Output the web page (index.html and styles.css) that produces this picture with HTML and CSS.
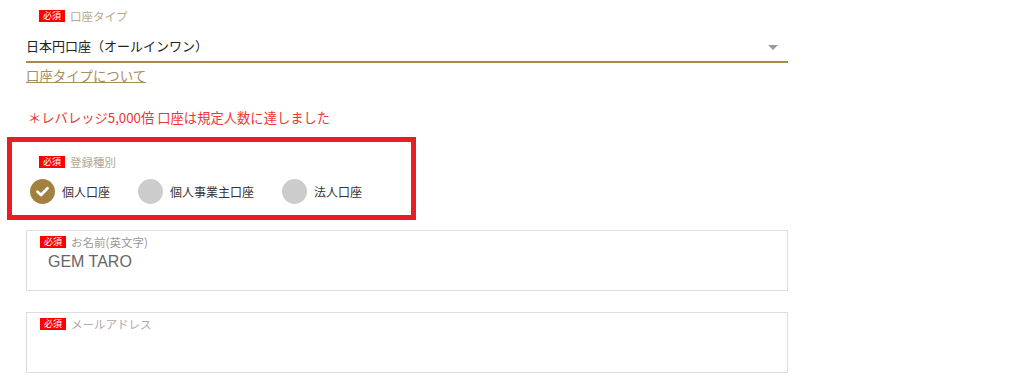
FILE: index.html
```html
<!DOCTYPE html>
<html lang="ja">

<head>
    <meta charset="utf-8" />
    <meta name="viewport" content="width=device-width" />
    <title>口座開設フォーム</title>
    <link rel="stylesheet" href="styles.css">
</head>
<body>
    <main class="form">
        <!-- 口座タイプ -->
        <div class="field-label"><span class="badge">必須</span>口座タイプ</div>
        <div class="select">
            <span>日本円口座（オールインワン）</span>
            <span class="select-arrow"></span>
        </div>
        <a class="link" href="#">口座タイプについて</a>
        <p class="notice">＊レバレッジ5,000倍 口座は規定人数に達しました</p>

        <!-- 登録種別 -->
        <section class="choice-box">
            <div class="field-label"><span class="badge">必須</span>登録種別</div>
            <div class="radios">
                <label class="radio is-checked">
                    <span class="radio-mark">
                        <svg width="25" height="25" viewBox="0 0 25 25"><polyline points="7.5,12.8 11,16 17.5,9.2" fill="none" stroke="#fff" stroke-width="2.8" stroke-linecap="round" stroke-linejoin="round"/></svg>
                    </span>
                    個人口座
                </label>
                <label class="radio"><span class="radio-mark"></span>個人事業主口座</label>
                <label class="radio"><span class="radio-mark"></span>法人口座</label>
            </div>
        </section>

        <!-- お名前 -->
        <div class="text-field">
            <div class="field-label is-gray"><span class="badge">必須</span>お名前(英文字)</div>
            <div class="text-value">GEM TARO</div>
        </div>

        <!-- メールアドレス -->
        <div class="text-field is-spaced">
            <div class="field-label is-light"><span class="badge">必須</span>メールアドレス</div>
            <div class="text-value"></div>
        </div>
    </main>
</body>

</html>
```

FILE: styles.css
```css
:root {
    --gold: #a88a4f;
    --gold-text: #a88d5e;
    --label-color: #b5a88e;
    --font-family: "Noto Sans CJK JP", "Noto Sans", sans-serif;
}

* {
    box-sizing: border-box;
    margin: 0;
    padding: 0;
}

body {
    background-color: #fff;
    font-family: var(--font-family);
    color: #333;
    margin: 0;
}

.form {
    width: 762px;
    margin-left: 26px;
    padding-top: 9px;
}

.field-label {
    display: flex;
    align-items: center;
    gap: 5px;
    height: 14px;
    padding-left: 13px;
    font-size: 11.5px;
    line-height: 14px;
    color: var(--label-color);
}

.field-label.is-gray {
    color: #999;
}

.field-label.is-light {
    color: #aaa;
}

.badge {
    display: inline-block;
    width: 26px;
    height: 12px;
    line-height: 12px;
    background-color: #f00;
    color: #fff;
    font-size: 9px;
    text-align: center;
}

.select {
    display: flex;
    justify-content: space-between;
    align-items: center;
    padding: 13px 10px 5px 0;
    border-bottom: 2px solid var(--gold);
    font-size: 13px;
    line-height: 20px;
    color: #222;
}

.select-arrow {
    width: 0;
    height: 0;
    margin-top: 3px;
    border-left: 5px solid transparent;
    border-right: 5px solid transparent;
    border-top: 5px solid #999;
}

.link {
    display: block;
    width: fit-content;
    margin-top: 2px;
    font-size: 13.4px;
    line-height: 20px;
    color: var(--gold-text);
    text-decoration: underline;
}

.notice {
    margin: 23px 0 0 2px;
    font-size: 13.3px;
    line-height: 20px;
    color: #ee3535;
}

/* 登録種別 (赤枠) */
.choice-box {
    width: 409px;
    margin: 9px 0 0 -19px;
    padding: 13px 0 11px 18px;
    border: 5px solid #ec1c24;
}

.choice-box .field-label {
    padding-left: 9px;
}

.radios {
    display: flex;
    gap: 28px;
    margin-top: 10px;
}

.radio {
    display: flex;
    align-items: center;
    gap: 7px;
    font-size: 12px;
    line-height: 25px;
    color: #333;
}

.radio-mark {
    display: flex;
    align-items: center;
    justify-content: center;
    width: 25px;
    height: 25px;
    border-radius: 50%;
    background-color: #ccc;
}

.radio.is-checked .radio-mark {
    background-color: #a2803f;
}

.text-field {
    height: 61px;
    margin-top: 10px;
    padding-top: 4px;
    border: 1px solid #ddd;
}

.text-field.is-spaced {
    margin-top: 21px;
}

.text-value {
    margin-top: 3px;
    padding-left: 21px;
    height: 20px;
    font-family: "Liberation Sans", Arial, sans-serif;
    font-size: 16px;
    line-height: 20px;
    color: #666;
}
```
